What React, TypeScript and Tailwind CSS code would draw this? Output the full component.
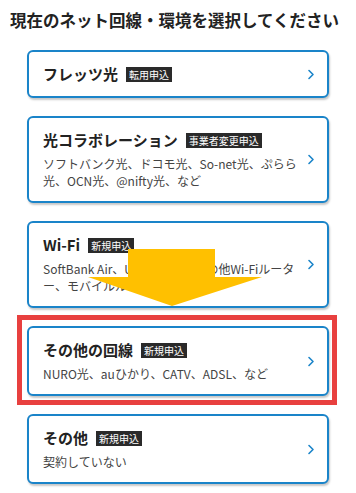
import { ReactNode } from 'react';

type Option = {
  title: string;
  tag: string;
  sub?: ReactNode;
  highlight?: boolean;
};

const options: Option[] = [
  { title: 'フレッツ光', tag: '転用申込' },
  {
    title: '光コラボレーション',
    tag: '事業者変更申込',
    sub: 'ソフトバンク光、ドコモ光、So-net光、ぷらら光、OCN光、@nifty光、など',
  },
  {
    title: 'Wi-Fi',
    tag: '新規申込',
    sub: 'SoftBank Air、UQ WiMAX、その他Wi-Fiルーター、モバイルルーター、など',
  },
  {
    title: 'その他の回線',
    tag: '新規申込',
    sub: 'NURO光、auひかり、CATV、ADSL、など',
    highlight: true,
  },
  { title: 'その他', tag: '新規申込', sub: '契約していない' },
];

function Chevron() {
  return (
    <svg width="8" height="11" viewBox="0 0 8 11" className="shrink-0">
      <path d="M2 1.5 L6 5.5 L2 9.5" fill="none" stroke="#1a84c9" strokeWidth="1.6" strokeLinecap="round" strokeLinejoin="round" />
    </svg>
  );
}

function OptionCard({ opt }: { opt: Option }) {
  return (
    <div className="relative">
      {/* Red annotation frame */}
      {opt.highlight && (
        <div className="absolute -left-[10px] -right-[8px] -top-[11px] -bottom-[9px] border-[5px] border-[#e8403f] pointer-events-none" />
      )}
      <button
        className={`relative w-full flex items-center text-left bg-white border-2 border-[#1a84c9] rounded-[6px] shadow-[1px_2px_2px_rgba(0,0,0,0.22)] pl-[14px] pr-[12px] ${
          opt.sub ? 'pt-[12px] pb-[12px]' : 'py-[12px]'
        }`}
      >
        <div className="flex-1 min-w-0 pr-[10px]">
          <div className="flex items-center gap-[8px] h-[20px]">
            <span className="text-[15px] font-bold text-[#222] leading-[20px]">{opt.title}</span>
            <span className="bg-[#2a2a2a] text-white text-[10px] leading-[15px] h-[15px] px-[3px]">{opt.tag}</span>
          </div>
          {opt.sub && (
            <p className="mt-[5px] text-[12px] leading-[17px] text-[#444]">{opt.sub}</p>
          )}
        </div>
        <Chevron />
      </button>
    </div>
  );
}

export default function App() {
  return (
    <div
      className="relative w-[356px] h-[493px] bg-white overflow-hidden"
      style={{ fontFamily: '"Noto Sans CJK JP", "Noto Sans", sans-serif' }}
    >
      <h1 className="pt-[8px] pl-[10px] text-[16.5px] leading-[24px] font-bold text-[#222] whitespace-nowrap">
        現在のネット回線・環境を選択してください
      </h1>

      <div className="mt-[18px] mx-[27px] flex flex-col gap-[18px]">
        {options.map(opt => (
          <OptionCard key={opt.title} opt={opt} />
        ))}
      </div>

      {/* Yellow arrow overlay */}
      <svg className="absolute left-[88px] top-[249px]" width="174" height="58" viewBox="0 0 174 58">
        <polygon points="40,0 127,0 127,28 174,28 84,57 0,28 40,28" fill="#ffc000" />
      </svg>
    </div>
  );
}
